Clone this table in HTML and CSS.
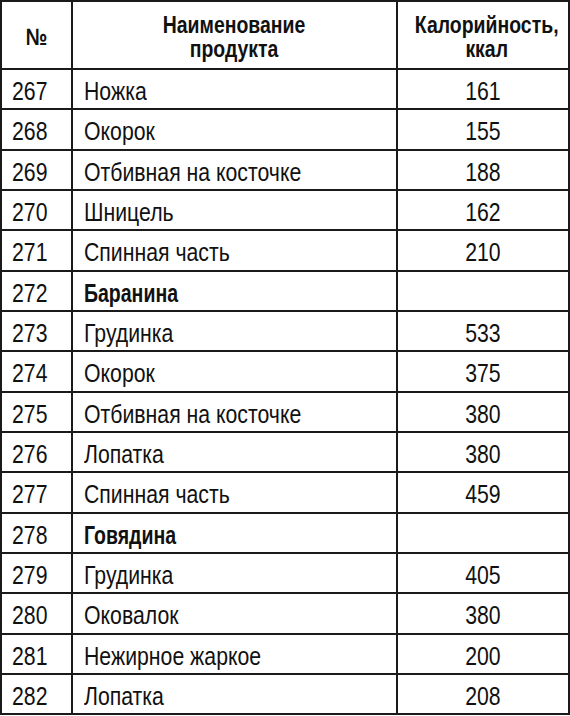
FILE: index.html
```html
<!DOCTYPE html>
<html lang="ru">
<head>
<meta charset="utf-8">
<link rel="stylesheet" href="styles.css">
</head>
<body>
<table class="cal">
  <colgroup><col class="c-num"><col class="c-name"><col class="c-kcal"></colgroup>
  <thead>
    <tr class="head">
      <th><span class="t"><span class="ln">№</span></span></th>
      <th><span class="t"><span class="ln">Наименование</span><span class="ln">продукта</span></span></th>
      <th><span class="t"><span class="ln">Калорийность,</span><span class="ln">ккал</span></span></th>
    </tr>
  </thead>
  <tbody>
    <tr><td class="num"><span class="t">267</span></td><td class="name"><span class="t">Ножка</span></td><td class="kcal"><span class="t">161</span></td></tr>
    <tr><td class="num"><span class="t">268</span></td><td class="name"><span class="t">Окорок</span></td><td class="kcal"><span class="t">155</span></td></tr>
    <tr><td class="num"><span class="t">269</span></td><td class="name"><span class="t">Отбивная на косточке</span></td><td class="kcal"><span class="t">188</span></td></tr>
    <tr><td class="num"><span class="t">270</span></td><td class="name"><span class="t">Шницель</span></td><td class="kcal"><span class="t">162</span></td></tr>
    <tr><td class="num"><span class="t">271</span></td><td class="name"><span class="t">Спинная часть</span></td><td class="kcal"><span class="t">210</span></td></tr>
    <tr><td class="num"><span class="t">272</span></td><td class="name group"><span class="t">Баранина</span></td><td class="kcal"></td></tr>
    <tr><td class="num"><span class="t">273</span></td><td class="name"><span class="t">Грудинка</span></td><td class="kcal"><span class="t">533</span></td></tr>
    <tr><td class="num"><span class="t">274</span></td><td class="name"><span class="t">Окорок</span></td><td class="kcal"><span class="t">375</span></td></tr>
    <tr><td class="num"><span class="t">275</span></td><td class="name"><span class="t">Отбивная на косточке</span></td><td class="kcal"><span class="t">380</span></td></tr>
    <tr><td class="num"><span class="t">276</span></td><td class="name"><span class="t">Лопатка</span></td><td class="kcal"><span class="t">380</span></td></tr>
    <tr><td class="num"><span class="t">277</span></td><td class="name"><span class="t">Спинная часть</span></td><td class="kcal"><span class="t">459</span></td></tr>
    <tr><td class="num"><span class="t">278</span></td><td class="name group"><span class="t">Говядина</span></td><td class="kcal"></td></tr>
    <tr><td class="num"><span class="t">279</span></td><td class="name"><span class="t">Грудинка</span></td><td class="kcal"><span class="t">405</span></td></tr>
    <tr><td class="num"><span class="t">280</span></td><td class="name"><span class="t">Оковалок</span></td><td class="kcal"><span class="t">380</span></td></tr>
    <tr><td class="num"><span class="t">281</span></td><td class="name"><span class="t">Нежирное жаркое</span></td><td class="kcal"><span class="t">200</span></td></tr>
    <tr><td class="num"><span class="t">282</span></td><td class="name"><span class="t">Лопатка</span></td><td class="kcal"><span class="t">208</span></td></tr>
  </tbody>
</table>
</body>
</html>
```

FILE: styles.css
```css
html, body {
  margin: 0;
  padding: 0;
  background: #fff;
}
body {
  font-family: "Liberation Sans", Arial, sans-serif;
  color: #111;
}
.cal {
  width: 570px;
  table-layout: fixed;
  border-collapse: separate;
  border-spacing: 0;
  border-top: 2px solid #1a1a1a;
  border-left: 2px solid #1a1a1a;
}
.c-num { width: 71px; }
.c-name { width: 325px; }
.c-kcal { width: 172px; }
.cal th, .cal td {
  border-right: 2px solid #1a1a1a;
  border-bottom: 2px solid #1a1a1a;
  padding: 0;
  vertical-align: middle;
  white-space: nowrap;
}
.t {
  display: inline-block;
  transform-origin: left center;
  transform: scaleX(0.85);
}
.ln {
  display: block;
  height: 24px;
  line-height: 24px;
}
.head { height: 68px; }
.cal th {
  font-weight: bold;
  font-size: 24px;
  line-height: 24px;
  text-align: center;
  padding-top: 3px;
}
.cal th .t {
  transform-origin: center center;
  transform: scaleX(0.81);
}
.cal tbody tr { height: 40.33px; }
.cal td {
  font-size: 25px;
  line-height: 26px;
  padding-top: 4px;
}
.num { padding-left: 10px !important; }
.name { padding-left: 11px !important; }
.kcal { text-align: center; }
.kcal .t { transform-origin: center center; }
.group { font-weight: bold; }
.group .t { transform: scaleX(0.78); }
```
